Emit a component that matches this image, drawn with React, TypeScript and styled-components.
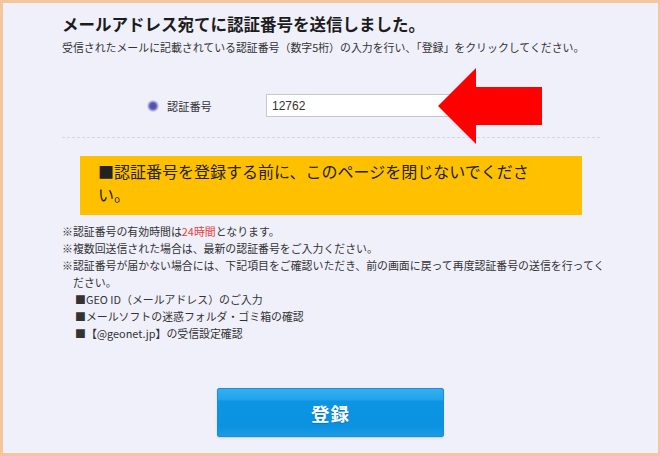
import React from 'react';
import styled, { createGlobalStyle } from 'styled-components';

const Global = createGlobalStyle`
  html, body { margin: 0; padding: 0; background: #f0f0fb; }
  body { font-family: "Noto Sans CJK JP", "Noto Sans", sans-serif; }
  * { box-sizing: border-box; }
`;

const Frame = styled.div`
  position: relative;
  width: 660px;
  height: 456px;
  background: #f0f0fb;
  border-style: solid;
  border-color: #f4c69a;
  border-width: 3px 2px 3px 3px;
  overflow: hidden;
  display: flex;
  flex-direction: column;
`;

const Content = styled.div`
  margin-left: 59px;
  width: 538px;
  padding-top: 9px;
  display: flex;
  flex-direction: column;
  color: #333;
`;

const Title = styled.h1`
  margin: 0;
  font-size: 16.5px;
  line-height: 24px;
  font-weight: 700;
  color: #1c1c1c;
  white-space: nowrap;
`;

const Lead = styled.p`
  margin: 3px 0 0;
  font-size: 10.9px;
  line-height: 16px;
  color: #333;
  white-space: nowrap;
`;

const FormRow = styled.div`
  margin-top: 39px;
  height: 23px;
  padding-left: 85px;
  display: flex;
  align-items: center;
`;

const Label = styled.label`
  width: 119px;
  display: flex;
  align-items: center;
  gap: 8px;
  font-size: 11.2px;
  line-height: 16px;
  color: #333;
`;

const CodeInput = styled.input`
  width: 190px;
  height: 23px;
  border: 1px solid #c8c8c8;
  background: #fff;
  padding: 0 5px;
  font-family: "Liberation Sans", Arial, sans-serif;
  font-size: 12px;
  color: #333;
  outline: none;
`;

const Divider = styled.hr`
  margin: 20px 0 0;
  border: 0;
  border-top: 1px dashed #d4d4e2;
  height: 0;
`;

const Warning = styled.div`
  margin: 18px 18px 0;
  height: 59px;
  background: #ffc000;
  padding: 4px 0 0 18px;
  font-size: 16px;
  line-height: 23px;
  color: #222;
  white-space: nowrap;
`;

const Notes = styled.ul`
  margin: 8px 0 0;
  padding: 0;
  list-style: none;
  font-size: 10.9px;
  line-height: 17px;
  color: #333;
`;

const Note = styled.li<{ $indent?: boolean }>`
  white-space: nowrap;
  padding-left: ${(p) => (p.$indent ? '13px' : '11px')};
  text-indent: ${(p) => (p.$indent ? '0' : '-11px')};
`;

const Red = styled.span`
  color: #e8413a;
`;

const ButtonRow = styled.div`
  margin-top: 46px;
  display: flex;
  justify-content: center;
`;

const SubmitButton = styled.button`
  width: 227px;
  height: 49px;
  border: 1px solid #1a8fd4;
  border-radius: 2px;
  background: linear-gradient(#35aef0 0%, #22a4ec 22%, #0c95e3 26%, #0b93e2 80%, #1a9be4 100%);
  color: #fff;
  font-family: "Noto Sans CJK JP", sans-serif;
  font-size: 18.5px;
  font-weight: 700;
  letter-spacing: 1px;
  text-shadow: 0 1px 1px rgba(0, 60, 120, 0.35);
  box-shadow: 0 1px 2px rgba(0, 0, 0, 0.15);
  cursor: pointer;
`;

const Arrow = styled.svg`
  position: absolute;
  left: 435px;
  top: 65px;
`;

const RadioDot = () => (
  <svg width="12" height="12" viewBox="0 0 12 12">
    <defs>
      <radialGradient id="rg" cx="50%" cy="50%" r="50%">
        <stop offset="0%" stopColor="#4b4bb0" />
        <stop offset="55%" stopColor="#5a5ab8" />
        <stop offset="75%" stopColor="#a9a9dc" />
        <stop offset="100%" stopColor="#d7d7f0" />
      </radialGradient>
    </defs>
    <circle cx="6" cy="6" r="6" fill="url(#rg)" />
  </svg>
);

export default function App() {
  return (
    <>
      <Global />
      <Frame>
        <Content>
          <Title>メールアドレス宛てに認証番号を送信しました。</Title>
          <Lead>受信されたメールに記載されている認証番号（数字5桁）の入力を行い、「登録」をクリックしてください。</Lead>
          <FormRow>
            <Label>
              <RadioDot />
              認証番号
            </Label>
            <CodeInput defaultValue="12762" />
          </FormRow>
          <Divider />
          <Warning>
            ■認証番号を登録する前に、このページを閉じないでくださ
            <br />
            い。
          </Warning>
          <Notes>
            <Note>
              ※認証番号の有効時間は<Red>24時間</Red>となります。
            </Note>
            <Note>※複数回送信された場合は、最新の認証番号をご入力ください。</Note>
            <Note>
              ※認証番号が届かない場合には、下記項目をご確認いただき、前の画面に戻って再度認証番号の送信を行ってく
              <br />
              ださい。
            </Note>
            <Note $indent>■GEO ID（メールアドレス）のご入力</Note>
            <Note $indent>■メールソフトの迷惑フォルダ・ゴミ箱の確認</Note>
            <Note $indent>■【@geonet.jp】の受信設定確認</Note>
          </Notes>
        </Content>
        <ButtonRow>
          <SubmitButton type="button">登録</SubmitButton>
        </ButtonRow>
        <Arrow width="104" height="76" viewBox="0 0 104 76">
          <polygon points="0,38 38,0 38,19 104,19 104,57 38,57 38,76" fill="#ff0000" />
        </Arrow>
      </Frame>
    </>
  );
}
